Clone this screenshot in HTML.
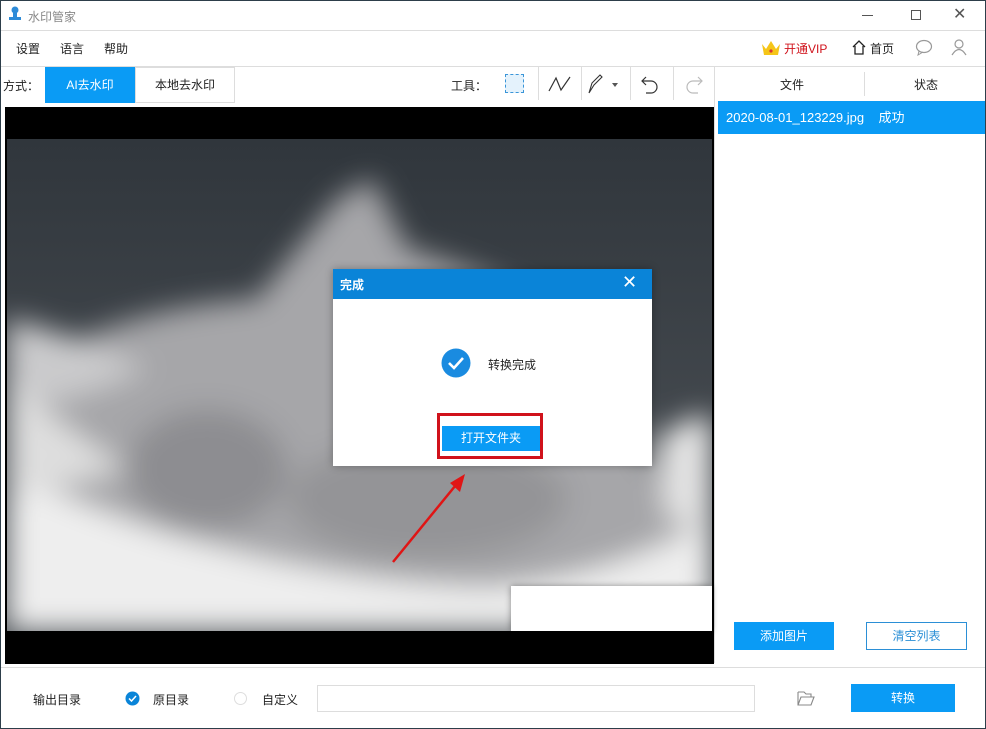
<!DOCTYPE html>
<html><head><meta charset="utf-8"><style>
*{margin:0;padding:0;box-sizing:border-box}
body{width:986px;height:729px;position:relative;background:#fff;font-family:"Liberation Sans","Noto Sans CJK SC",sans-serif;font-size:12px;color:#222;overflow:hidden}
.a{position:absolute}
</style></head><body>
<!-- title bar -->
<div class="a" style="left:0;top:0;width:986px;height:31px;border-bottom:1px solid #ddd"></div>
<svg class="a" style="left:8px;top:6px" width="14" height="16"><circle cx="7" cy="4" r="3.5" fill="#2d8bd8"/><rect x="5" y="6" width="4" height="5" fill="#2d8bd8"/><rect x="1" y="11" width="12" height="3" fill="#2d8bd8"/></svg>
<div class="a" style="left:28px;top:8px;color:#888;font-size:12px">水印管家</div>
<div class="a" style="left:862px;top:15px;width:11px;height:1px;background:#555"></div>
<div class="a" style="left:911px;top:10px;width:10px;height:10px;border:1px solid #555"></div>
<div class="a" style="left:953px;top:4px;font-size:16px;color:#555">✕</div>
<!-- menu -->
<div class="a" style="left:16px;top:40px">设置</div>
<div class="a" style="left:60px;top:40px">语言</div>
<div class="a" style="left:104px;top:40px">帮助</div>
<svg class="a" style="left:761px;top:39px" width="20" height="17"><path d="M1 5 L5 10 L10 2 L15 10 L19 5 L17 16 L3 16Z" fill="#f5c518"/><circle cx="10" cy="12" r="1.6" fill="#d33"/></svg>
<div class="a" style="left:784px;top:40px;color:#d0121b">开通VIP</div>
<svg class="a" style="left:851px;top:39px" width="16" height="16"><path d="M2 8 L8 2 L14 8 M4 7 V15 H12 V7" fill="none" stroke="#222" stroke-width="1.3"/></svg>
<div class="a" style="left:870px;top:40px">首页</div>
<svg class="a" style="left:915px;top:39px" width="18" height="17"><ellipse cx="9" cy="7.5" rx="7.5" ry="6" fill="none" stroke="#999" stroke-width="1.2"/><path d="M4 12 L3 16 L8 13" fill="none" stroke="#999"/></svg>
<svg class="a" style="left:951px;top:38px" width="16" height="18"><circle cx="8" cy="6" r="4" fill="none" stroke="#999" stroke-width="1.2"/><path d="M1 17 Q8 6 15 17" fill="none" stroke="#999" stroke-width="1.2"/></svg>
<div class="a" style="left:0;top:66px;width:986px;height:1px;background:#ddd"></div>
<!-- toolbar -->
<div class="a" style="left:3px;top:77px">方式：</div>
<div class="a" style="left:45px;top:67px;width:90px;height:36px;background:#0a9bf5;color:#fff;text-align:center;line-height:36px">AI去水印</div>
<div class="a" style="left:135px;top:67px;width:100px;height:36px;border:1px solid #ddd;text-align:center;line-height:34px">本地去水印</div>
<div class="a" style="left:451px;top:77px">工具：</div>
<div class="a" style="left:505px;top:74px;width:19px;height:19px;border:1px dashed #3a95d8;background:#e4f2fc"></div>
<div class="a" style="left:538px;top:67px;width:1px;height:33px;background:#ddd"></div>
<svg class="a" style="left:548px;top:75px" width="24" height="18"><path d="M1 16 L8 3 L13 15 L22 2" fill="none" stroke="#333" stroke-width="1.2"/></svg>
<div class="a" style="left:581px;top:67px;width:1px;height:33px;background:#ddd"></div>
<svg class="a" style="left:586px;top:73px" width="32" height="22"><path d="M3 20 L6 10 L14 2 L16 4 L8 12Z" fill="none" stroke="#333" stroke-width="1.1"/><path d="M26 10 L32 10 L29 14Z" fill="#555"/></svg>
<div class="a" style="left:630px;top:67px;width:1px;height:33px;background:#ddd"></div>
<svg class="a" style="left:640px;top:74px" width="20" height="20"><path d="M6 3 L2 7 L6 11 M2 7 H11 A6 6 0 0 1 11 19 H6" fill="none" stroke="#333" stroke-width="1.2"/></svg>
<div class="a" style="left:673px;top:67px;width:1px;height:33px;background:#ddd"></div>
<svg class="a" style="left:684px;top:74px" width="20" height="20"><path d="M14 3 L18 7 L14 11 M18 7 H9 A6 6 0 0 0 9 19 H14" fill="none" stroke="#bbb" stroke-width="1.2"/></svg>
<!-- right panel -->
<div class="a" style="left:714px;top:67px;width:1px;height:596px;background:#ddd"></div>
<div class="a" style="left:780px;top:76px">文件</div>
<div class="a" style="left:864px;top:72px;width:1px;height:24px;background:#ddd"></div>
<div class="a" style="left:914px;top:76px">状态</div>
<div class="a" style="left:718px;top:101px;width:267px;height:33px;background:#0a9bf5;color:#fff;font-size:13px;line-height:33px;padding-left:8px">2020-08-01_123229.jpg&nbsp;&nbsp;&nbsp;&nbsp;成功</div>
<div class="a" style="left:734px;top:622px;width:100px;height:28px;background:#0a9bf5;color:#fff;text-align:center;line-height:28px">添加图片</div>
<div class="a" style="left:866px;top:622px;width:101px;height:28px;border:1px solid #2b8fd6;color:#2b8fd6;text-align:center;line-height:26px">清空列表</div>
<!-- image -->
<div class="a" style="left:5px;top:107px;width:709px;height:557px;background:#000"></div>
<svg class="a" style="left:7px;top:139px" width="705" height="492">
<defs><filter id="b" x="-10%" y="-10%" width="120%" height="120%"><feGaussianBlur stdDeviation="14"/></filter>
<linearGradient id="bg" x1="0" y1="0" x2="0" y2="1"><stop offset="0" stop-color="#30363c"/><stop offset="1" stop-color="#50555a"/></linearGradient></defs>
<rect width="705" height="492" fill="url(#bg)"/>
<g filter="url(#b)">
<path d="M0 240 Q100 170 250 160 L330 60 L365 40 L400 110 Q500 140 560 180 Q620 240 640 320 Q670 350 700 370 L690 430 Q600 450 520 450 Q400 450 300 430 Q150 410 0 340 Z" fill="#a6a6a9"/>
<path d="M0 180 Q80 200 140 230 Q80 260 0 270Z" fill="#cacacc"/>
<ellipse cx="200" cy="330" rx="80" ry="60" fill="#8d8d91"/>
<ellipse cx="420" cy="360" rx="140" ry="60" fill="#949497"/>
<path d="M0 330 Q100 380 200 405 Q350 445 480 448 Q600 440 705 380 L705 492 L0 492Z" fill="#eeeeee"/>
<path d="M0 240 Q60 290 120 330 L0 360Z" fill="#dedede"/>
<path d="M650 300 Q690 270 705 280 L705 390 L660 380Z" fill="#e4e4e4"/>
</g>
</svg>
<div class="a" style="left:511px;top:586px;width:201px;height:45px;background:#fff;box-shadow:0 0 6px rgba(0,0,0,.4)"></div>
<svg class="a" style="left:390px;top:470px" width="80" height="95"><path d="M3 92 L70 10" stroke="#e01515" stroke-width="2.5"/><path d="M75 4 L60 13 L70 22Z" fill="#e01515"/></svg>
<!-- dialog -->
<div class="a" style="left:333px;top:269px;width:319px;height:197px;background:#fff;box-shadow:0 0 8px rgba(0,0,0,.3)"></div>
<div class="a" style="left:333px;top:269px;width:319px;height:30px;background:#0a84d8"></div>
<div class="a" style="left:340px;top:276px;color:#fff;font-weight:bold">完成</div>
<div class="a" style="left:622px;top:272px;color:#fff;font-size:18px">✕</div>
<svg class="a" style="left:441px;top:348px" width="30" height="30"><circle cx="15" cy="15" r="14.5" fill="#1a8be0"/><path d="M8 15 L13 20 L22 10" fill="none" stroke="#fff" stroke-width="2.6"/></svg>
<div class="a" style="left:488px;top:356px">转换完成</div>
<div class="a" style="left:437px;top:413px;width:106px;height:46px;border:3px solid #d0121b"></div>
<div class="a" style="left:442px;top:426px;width:98px;height:25px;background:#0a9bf5;color:#fff;text-align:center;line-height:25px">打开文件夹</div>
<!-- bottom -->
<div class="a" style="left:0;top:667px;width:986px;height:1px;background:#ddd"></div>
<div class="a" style="left:33px;top:691px">输出目录</div>
<svg class="a" style="left:125px;top:691px" width="15" height="15"><circle cx="7.5" cy="7.5" r="7" fill="#0a84d8"/><path d="M4 7.5 L6.5 10 L11 5" fill="none" stroke="#fff" stroke-width="1.5"/></svg>
<div class="a" style="left:153px;top:691px">原目录</div>
<div class="a" style="left:234px;top:692px;width:13px;height:13px;border:1px solid #ddd;border-radius:50%"></div>
<div class="a" style="left:262px;top:691px">自定义</div>
<div class="a" style="left:317px;top:685px;width:438px;height:27px;border:1px solid #ddd"></div>
<svg class="a" style="left:797px;top:689px" width="18" height="17"><path d="M1 3 H7 L9 5 H14 V8 M1 3 V16 H14 L17 8 H4 L1 16" fill="none" stroke="#888" stroke-width="1.1"/></svg>
<div class="a" style="left:851px;top:684px;width:104px;height:28px;background:#0a9bf5;color:#fff;text-align:center;line-height:28px">转换</div>
<div class="a" style="left:0;top:0;width:986px;height:729px;border:1px solid #2d3e4a;pointer-events:none"></div>
</body></html>
